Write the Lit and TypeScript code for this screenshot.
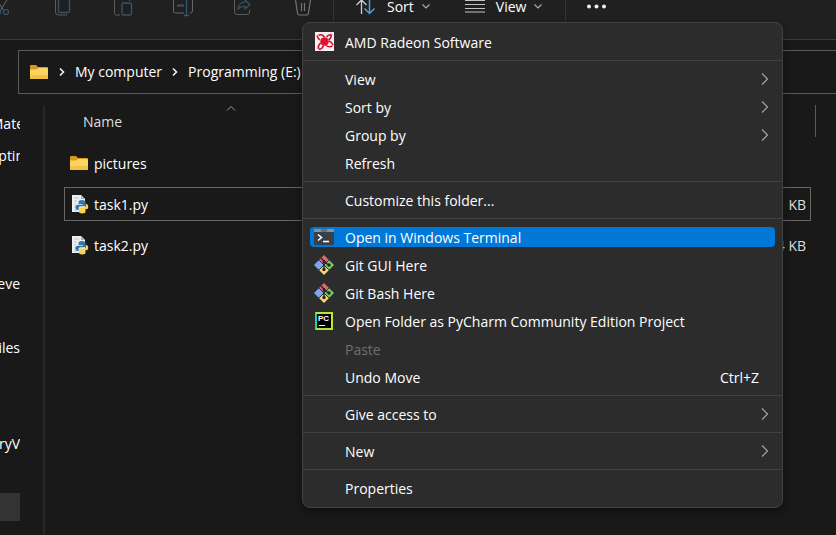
import { LitElement, html, svg, css, nothing, TemplateResult } from "lit";
import { customElement } from "lit/decorators.js";
import { classMap } from "lit/directives/class-map.js";

interface MenuEntry {
  label: string;
  icon?: TemplateResult;
  submenu?: boolean;
  shortcut?: string;
  active?: boolean;
  disabled?: boolean;
}

const icon = (w: number, h: number, body: unknown) =>
  html`<svg width=${w} height=${h} viewBox="0 0 ${w} ${h}" fill="none" aria-hidden="true">${body}</svg>`;

const chevronDown = icon(10, 14, svg`<path d="M1.500 4.500 5 8l3.500-3.500" stroke="#a8a8a8" stroke-width="1.200"/>`);
const crumbArrow = icon(6, 10, svg`<path d="M1 1.500 4.500 5 1 8.500" stroke="#f2f2f2" stroke-width="1.600"/>`);
const submenuArrow = icon(8, 14, svg`<path d="M1 1.500 6.500 7 1 12.500" stroke="#a5a5a5" stroke-width="1.200"/>`);

const folder = icon(20, 18, svg`
  <path d="M1 3q0-1 1-1h5l2 2h9q1 0 1 1v4H1z" fill="#d99a1c"/>
  <path d="M1 6.500h6L9.500 5H18q1 0 1 1v9q0 1-1 1H2q-1 0-1-1z" fill="#fcd462"/>
  <path d="M1 12h18v3q0 1-1 1H2q-1 0-1-1z" fill="#f5c342"/>`);

const python = icon(20, 20, svg`
  <path d="M3 1h9l4 4v13H3z" fill="#eceff1"/>
  <path d="M12 1v4h4z" fill="#aab2b8"/>
  <path d="M5 4h5M5 7h3M5 10h2M5 13h2M5 16h3" stroke="#b9c2c8"/>
  <path d="M13 6c-3 0-3.500 1-3.500 2.500V10h4v.7H8.500C7 10.700 6.500 12 6.500 13.500S7.200 16 8.500 16h1.200v-1.800c0-1.200.8-1.900 2-1.900h3c1 0 1.800-.8 1.800-1.800v-2C16.500 7 15.500 6 13 6z" fill="#3776ab"/>
  <path d="M13 19.500c3 0 3.500-1 3.500-2.300v-1.400h-4v-.6h5c1.200 0 1.700-1 1.700-2.500s-.7-2.700-1.800-2.700h-.7v1.500c0 1.200-.9 2-2 2h-3c-1 0-1.900.8-1.900 1.800v2c0 1.300 1 2.200 3.200 2.200z" fill="#f7d44c"/>`);

const radeon = icon(20, 20, svg`
  <path d="M1 0h19v19H1z" fill="#f7eef0"/>
  <circle cx="10.500" cy="9.500" r="4.300" fill="#e2122f"/>
  <path d="M4.500 3.200Q8 2 10.500 5M3 3.500Q4 6.500 6 8M17.500 2.500Q17.500 6 14.500 8M17 2.500Q14 3 12.500 5M19 13Q18 10 15 9M18.500 14Q15 15.500 12 13.500M4.500 17Q3.500 14 6.500 11M5 17.500Q8.500 17 9.500 13.500" stroke="#c90f2b" stroke-width="1.500"/>`);

const terminal = icon(20, 20, svg`
  <rect x="0" y="2" width="20" height="16" rx="1" fill="#38404a"/>
  <path d="M0 2h20v3H0z" fill="#8e9297"/>
  <path d="M7 2h6v3H7z" fill="#6c7076"/>
  <path d="M4 7.500 7.500 10.500l-3.500 3" stroke="#fff" stroke-width="1.600"/>
  <path d="M9 14.500h6" stroke="#fff" stroke-width="1.600"/>`);

const git = icon(20, 20, svg`
  <path d="M10 0l5 5-5 5-5-5z" fill="#e0686c"/>
  <path d="M15 5l5 5-5 5-5-5z" fill="#7ccb62"/>
  <path d="M5 5l5 5-5 5-5-5z" fill="#7ba7ee"/>
  <path d="M10 10l5 5-5 5-5-5z" fill="#f5d873"/>
  <path d="M5 5l10 10M15 5 5 15" stroke="#2c2c2c"/>
  <path d="M7 3 10 6v9M10 6.500l4.500 3.500" stroke="#20262a" stroke-width="1.400"/>
  <circle cx="10" cy="6.500" r="1.400" fill="#20262a"/>
  <circle cx="10" cy="14.500" r="1.700" fill="#20262a"/>
  <circle cx="15" cy="10" r="1.700" fill="#20262a"/>`);

const pycharm = html`<span class="pycharm">PC</span>`;

const fileTools: { label: string; art: TemplateResult }[] = [
  { label: "Cut", art: icon(20, 18, svg`<path d="M4 0l7 11M14 0 7 11" stroke="#666"/><circle cx="5" cy="12" r="2.500" stroke="#35566a" stroke-width="1.200"/><circle cx="13" cy="12" r="2.500" stroke="#35566a" stroke-width="1.200"/>`) },
  { label: "Copy", art: icon(20, 18, svg`<path d="M2.500 0v12q0 3 3 3H14" stroke="#5c5c5c"/><path d="M5.500 0v11q0 1.500 1.500 1.500h8q1.500 0 1.500-1.500V0" stroke="#35566a" stroke-width="1.300"/>`) },
  { label: "Paste", art: icon(20, 18, svg`<path d="M1.500 0v13q0 2 2 2H7M16.500 0v1" stroke="#5c5c5c"/><rect x="9" y="3" width="9.500" height="12" rx="1.500" stroke="#35566a" stroke-width="1.300"/>`) },
  { label: "Rename", art: icon(20, 18, svg`<path d="M.5 0v11q0 2 2 2H11M17 13q2.500 0 2.500-2V0" stroke="#666"/><path d="M4 5.500h7" stroke="#35566a" stroke-width="2"/><path d="M13.500 0v15M11 15.500h5" stroke="#35566a" stroke-width="1.300"/>`) },
  { label: "Share", art: icon(20, 18, svg`<path d="M1.500 0v12q0 2.500 2.500 2.500h10q2.500 0 2.500-2.500v-2" stroke="#5c5c5c"/><path d="M5 9q1-7 7-7v-2l5 4.500-5 4.500V6.500Q8 6 5 9z" stroke="#35566a" stroke-width="1.200"/>`) },
  { label: "Delete", art: icon(20, 18, svg`<path d="M2.500 0 4.500 13q.3 2 2 2h7q1.700 0 2-2L17.500 0M8.500 3v8M11.500 3v8" stroke="#757575" stroke-width="1.200"/>`) },
];

const sortArt = icon(22, 18, svg`
  <path d="M6.500 14V0M1.500 5l5-5 5 5" stroke="#d0d0d0" stroke-width="1.300"/>
  <path d="M14.500 0v13M9.500 8.500l5 5 5-5" stroke="#4ba3dd" stroke-width="1.500"/>`);
const viewArt = icon(22, 18, svg`<path d="M1 .5h20M1 4.500h20M1 8.500h20M1 12h20" stroke="#c4c4c4" stroke-width="1.200"/>`);
const moreArt = icon(22, 14, svg`<circle cx="3" cy="6.500" r="2" fill="#f0f0f0"/><circle cx="10.500" cy="6.500" r="2" fill="#f0f0f0"/><circle cx="18" cy="6.500" r="2" fill="#f0f0f0"/>`);

const menuGroups: MenuEntry[][] = [
  [{ label: "AMD Radeon Software", icon: radeon }],
  [
    { label: "View", submenu: true },
    { label: "Sort by", submenu: true },
    { label: "Group by", submenu: true },
    { label: "Refresh" },
  ],
  [{ label: "Customize this folder..." }],
  [
    { label: "Open in Windows Terminal", icon: terminal, active: true },
    { label: "Git GUI Here", icon: git },
    { label: "Git Bash Here", icon: git },
    { label: "Open Folder as PyCharm Community Edition Project", icon: pycharm },
    { label: "Paste", disabled: true },
    { label: "Undo Move", shortcut: "Ctrl+Z" },
  ],
  [{ label: "Give access to", submenu: true }],
  [{ label: "New", submenu: true }],
  [{ label: "Properties" }],
];

@customElement("context-menu")
export class ContextMenu extends LitElement {
  static styles = css`
    :host {
      display: block;
      box-sizing: border-box;
      padding: 5px 0;
      border: 1px solid #424242;
      border-radius: 8px;
      background: #2c2c2c;
      box-shadow: 0 4px 10px #00000066;
    }
    .line {
      height: 1px;
      margin: 4px 0;
      border: 0;
      background: #414141;
    }
    .group {
      display: flow-root;
    }
    .item {
      display: flex;
      align-items: center;
      width: calc(100% - 14px);
      height: 20px;
      margin: 4px 7px;
      padding: 0 6px 0 4px;
      border: 0;
      border-radius: 4px;
      background: none;
      color: #fff;
      font: inherit;
      line-height: 20px;
      text-align: left;
      white-space: nowrap;
    }
    .item + .item {
      margin-top: 8px;
    }
    .active {
      background: #0078d7;
    }
    .item:disabled {
      color: #6f6f6f;
    }
    .icon {
      display: flex;
      justify-content: center;
      width: 20px;
      margin-right: 11px;
    }
    .label,
    .shortcut {
      padding-top: 2px;
    }
    .label {
      flex: 1;
    }
    .shortcut {
      margin-right: 10px;
    }
    .pycharm {
      box-sizing: border-box;
      width: 18px;
      height: 18px;
      padding-left: 1px;
      border: 2px solid #b8e62e;
      border-left-color: #21d789;
      background: linear-gradient(#fff, #fff) 2px 11px / 6px 1px no-repeat #000;
      color: #fff;
      font: bold 8px/10px "Liberation Sans", sans-serif;
    }
  `;

  render() {
    return menuGroups.map(
      (group, i) => html`
        ${i ? html`<hr class="line" />` : nothing}
        <div class="group" role="group">
          ${group.map(
            (e) => html`<button class=${classMap({ item: true, active: !!e.active })} role="menuitem" ?disabled=${e.disabled}>
              <span class="icon">${e.icon ?? nothing}</span>
              <span class="label">${e.label}</span>
              ${e.shortcut ? html`<span class="shortcut">${e.shortcut}</span>` : nothing}
              ${e.submenu ? submenuArrow : nothing}
            </button>`
          )}
        </div>
      `
    );
  }
}

const navSlots = ["Mate", "ptin", "", "", "", "eve", "", "iles", "", "", "oryV", "", " "];
const cutNames = new Set(["Mate", "ptin"]);

const files = [
  { name: "pictures", art: folder, size: "", selected: false },
  { name: "task1.py", art: python, size: "1 KB", selected: true },
  { name: "task2.py", art: python, size: "4 KB", selected: false },
];

@customElement("app-root")
export class AppRoot extends LitElement {
  static styles = css`
    :host {
      display: flex;
      flex-direction: column;
      position: relative;
      min-height: 100vh;
      overflow: hidden;
      background: #191919;
      color: #fff;
      font: 14px/20px "Open Sans", "Noto Sans", sans-serif;
    }
    button {
      display: flex;
      align-items: flex-start;
      padding: 0;
      border: 0;
      background: none;
      color: inherit;
      font: inherit;
    }
    .toolbar {
      display: flex;
      height: 39px;
      border-bottom: 1px solid #3d3d3d;
      background: #202020;
    }
    .tools {
      display: flex;
      margin-left: -27px;
    }
    .tool {
      justify-content: center;
      width: 60px;
    }
    .split {
      width: 1px;
      height: 24px;
      background: #353535;
    }
    .drops {
      display: flex;
      gap: 33px;
      padding: 0 22px 0 21px;
    }
    .drop {
      gap: 10px;
      line-height: 14px;
    }
    .drop span {
      margin-right: -3px;
    }
    .more {
      margin-left: 20px;
    }
    .address {
      display: flex;
      align-items: center;
      gap: 10px;
      height: 42px;
      margin: 10px 0 0 18px;
      padding-left: 10px;
      border: 1px solid #5a5a5a;
      border-right: 0;
    }
    .address a {
      color: inherit;
      text-decoration: none;
    }
    .body {
      display: flex;
      flex: 1;
    }
    .nav {
      width: 20px;
      margin-top: 14px;
      overflow: hidden;
    }
    .slot {
      display: flex;
      justify-content: flex-end;
      align-items: center;
      height: 32px;
      color: inherit;
      text-decoration: none;
    }
    .cut {
      margin-right: -4px;
    }
    .here {
      height: 28px;
      margin-top: 1px;
      background: #333;
    }
    .files {
      display: flex;
      flex: 1;
      align-items: flex-start;
      margin: 11px 0 0 23px;
      padding: 0 20px 0 19px;
      border-left: 2px solid #272727;
    }
    .edge {
      width: 1px;
      height: 32px;
      margin-left: 4px;
      background: #5a5a5a;
    }
    table {
      flex: 1;
      margin-top: -7px;
      border-spacing: 0 7px;
      table-layout: fixed;
    }
    th,
    td {
      box-sizing: border-box;
      height: 34px;
      padding: 0 5px;
      text-align: left;
      font-weight: 400;
    }
    th:first-child {
      position: relative;
      width: 333px;
      padding: 0 0 0 19px;
      color: #dedede;
    }
    .caret {
      position: absolute;
      top: 0;
      left: 50%;
      width: 10px;
      height: 6px;
      margin-left: -5px;
    }
    .size {
      padding-top: 2px;
      text-align: right;
      color: #dedede;
    }
    .selected {
      outline: 1px solid #666;
      outline-offset: -1px;
    }
    .name {
      display: flex;
      align-items: center;
      gap: 5px;
    }
    .name span {
      padding-top: 2px;
    }
    .hidden {
      visibility: hidden;
    }
    .menu {
      position: absolute;
      top: 22px;
      left: 302px;
      right: 53px;
    }
  `;

  render() {
    return html`
      <header class="toolbar">
        <div class="tools">
          ${fileTools.map((t) => html`<button class="tool" aria-label=${t.label}>${t.art}</button>`)}
        </div>
        <div class="split"></div>
        <div class="drops">
          <button class="drop">${sortArt}<span>Sort</span>${chevronDown}</button>
          <button class="drop">${viewArt}<span>View</span>${chevronDown}</button>
        </div>
        <div class="split"></div>
        <button class="more" aria-label="See more">${moreArt}</button>
      </header>
      <nav class="address" aria-label="Address">
        ${folder}${crumbArrow}<a href="#computer">My computer</a>${crumbArrow}<a href="#programming">Programming (E:)</a>
      </nav>
      <main class="body">
        <nav class="nav" aria-label="Folders">
          ${navSlots.map((n) =>
            n === " "
              ? html`<div class="slot here"></div>`
              : n
                ? html`<a class="slot" href="#folder"><span class=${classMap({ cut: cutNames.has(n) })}>${n}</span></a>`
                : html`<div class="slot"></div>`
          )}
        </nav>
        <section class="files">
          <table>
            <thead>
              <tr>
                <th scope="col">
                  Name
                  <svg class="caret" viewBox="0 0 10 6" fill="none"><path d="M1 5.500 5 1.500l4 4" stroke="#999" /></svg>
                </th>
                <th scope="col" class="size"><span class="hidden">Size</span></th>
              </tr>
            </thead>
            <tbody>
              ${files.map(
                (f) => html`<tr class=${classMap({ selected: f.selected })}>
                  <td><div class="name">${f.art}<span>${f.name}</span></div></td>
                  <td class="size">${f.size}</td>
                </tr>`
              )}
            </tbody>
          </table>
          <div class="edge"></div>
        </section>
      </main>
      <context-menu class="menu" role="menu"></context-menu>
    `;
  }
}
